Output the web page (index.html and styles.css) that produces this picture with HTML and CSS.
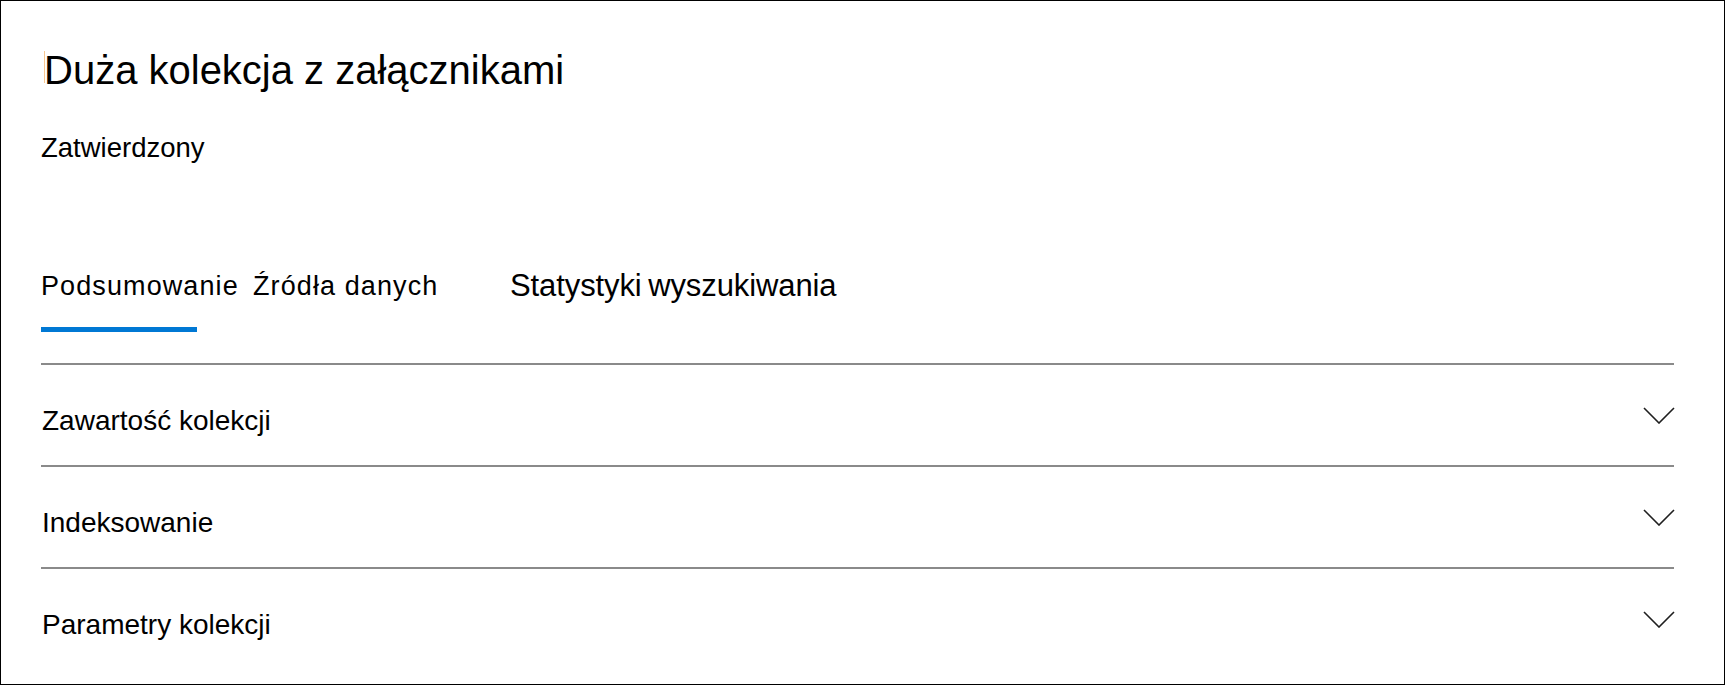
FILE: index.html
```html
<!DOCTYPE html>
<html lang="pl">
<head>
<meta charset="utf-8">
<title>Duża kolekcja z załącznikami</title>
<link rel="stylesheet" href="styles.css">
</head>
<body>
<main class="page">
  <h1 class="title">Duża kolekcja z załącznikami</h1>
  <p class="status">Zatwierdzony</p>
  <nav class="tabs">
    <span class="tab tab-active">Podsumowanie</span>
    <span class="tab">Źródła danych</span>
    <span class="tab tab-wide">Statystyki wyszukiwania</span>
  </nav>
  <div class="tab-indicator"></div>
  <section class="sections">
    <div class="row">
      <span class="row-label">Zawartość kolekcji</span>
      <svg class="chevron" width="32" height="17" viewBox="0 0 32 17" aria-hidden="true"><path d="M1 1 L16 16 L31 1" /></svg>
    </div>
    <div class="row">
      <span class="row-label">Indeksowanie</span>
      <svg class="chevron" width="32" height="17" viewBox="0 0 32 17" aria-hidden="true"><path d="M1 1 L16 16 L31 1" /></svg>
    </div>
    <div class="row">
      <span class="row-label">Parametry kolekcji</span>
      <svg class="chevron" width="32" height="17" viewBox="0 0 32 17" aria-hidden="true"><path d="M1 1 L16 16 L31 1" /></svg>
    </div>
  </section>
</main>
</body>
</html>
```
FILE: styles.css
```css
* {
  box-sizing: border-box;
}

html, body {
  margin: 0;
  padding: 0;
  background: #fff;
}

body {
  font-family: "Liberation Sans", Arial, sans-serif;
  color: #000;
}

.page {
  width: 1725px;
  height: 685px;
  border: 1px solid #000;
  padding: 45px 50px 0 40px;
  background: #fff;
  overflow: hidden;
}

.title {
  margin: 0;
  font-size: 40px;
  font-weight: 400;
  line-height: 48px;
  white-space: nowrap;
}

.title::before {
  content: "";
  display: inline-block;
  width: 1px;
  height: 32px;
  margin-left: 3px;
  margin-right: -1px;
  background: #f8c790;
  vertical-align: 1px;
}

.status {
  margin: 38px 0 0;
  font-size: 27.5px;
  line-height: 32px;
}

.tabs {
  display: grid;
  grid-template-columns: 212px 257px auto;
  align-items: center;
  margin-top: 106px;
  height: 32px;
}

.tab {
  font-size: 27px;
  line-height: 32px;
  letter-spacing: 1.1px;
  white-space: nowrap;
}

.tab-wide {
  font-size: 31px;
  letter-spacing: -0.1px;
  word-spacing: -2px;
}

.tab-indicator {
  width: 156px;
  height: 5px;
  margin-top: 25px;
  background: #0078d4;
}

.sections {
  margin-top: 31px;
}

.row {
  display: flex;
  align-items: center;
  justify-content: space-between;
  height: 102px;
  border-top: 2px solid #8a8a8a;
}

.row-label {
  font-size: 28px;
  line-height: 32px;
  padding-top: 12px;
  padding-left: 1px;
}

.chevron {
  display: block;
  margin-right: -1px;
}

.chevron path {
  fill: none;
  stroke: #1f1f1f;
  stroke-width: 1.6;
}
```
